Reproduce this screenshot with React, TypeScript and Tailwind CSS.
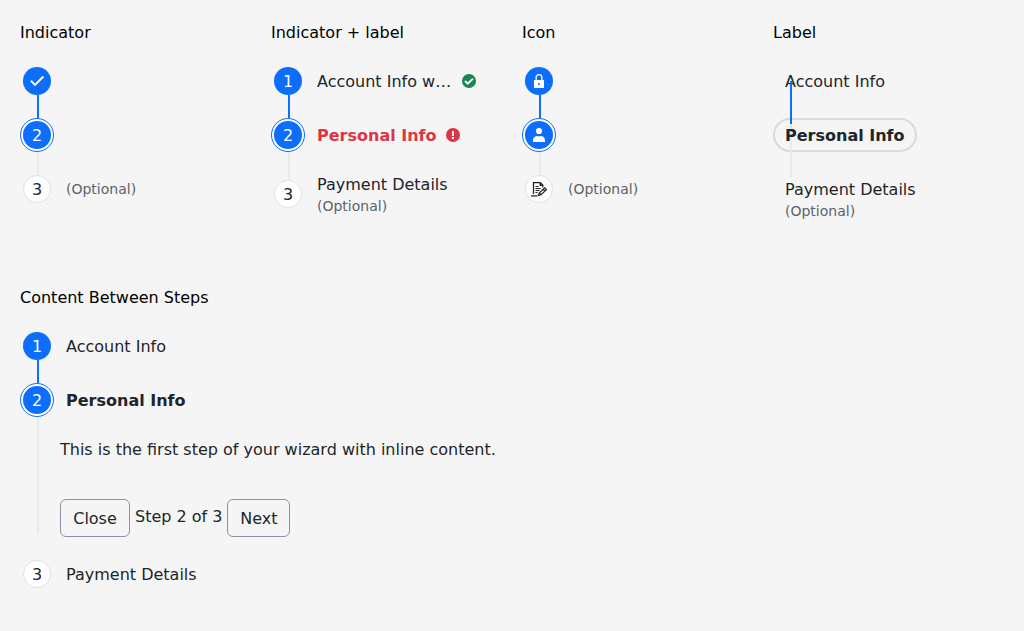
import React from "react";

type Kind = "done" | "active" | "todo";

const circleStyles: Record<Kind, string> = {
  done: "size-7 mx-[3px] bg-[#0d6efd] text-white",
  active: "size-[34px] border border-[#0d6efd] bg-white text-white",
  todo: "size-7 mx-[3px] border border-[#dfe1e4] bg-white text-[#212529]",
};

function Step({ kind, mark, line, optional, label, top, children }: {
  kind: Kind;
  mark: React.ReactNode;
  line?: string;
  label?: React.ReactNode;
  optional?: boolean;
  top?: string;
  children?: React.ReactNode;
}) {
  const content = typeof mark === "string" ? <span className="pt-0.5">{mark}</span> : mark;
  return (
    <li className={`flex ${top ?? ""}`}>
      <div className="flex w-[34px] shrink-0 flex-col">
        <span className={`flex shrink-0 items-center justify-center rounded-full ${circleStyles[kind]}`}>
          {kind === "active" ? (
            <span className="flex size-7 shrink-0 items-center justify-center rounded-full bg-[#0d6efd]">{content}</span>
          ) : content}
        </span>
        {line && <span className={`ml-[17px] w-0.5 ${line}`} />}
      </div>
      <div className="ml-3">
        <div className={`flex items-center ${kind === "active" ? "h-[34px]" : "h-7"}`}>
          {label}
          {optional && <small className="text-sm text-[#5c636a]">(Optional)</small>}
        </div>
        {children}
      </div>
    </li>
  );
}

const blue = "h-[23px] bg-[#0d6efd]";
const gray = "h-[23px] bg-[#e6ebef]";

const Check = () => (
  <svg width="16" height="16" viewBox="0 0 16 16" fill="none" stroke="#fff" strokeWidth="2">
    <path d="M1.9 7.8 6 11.9 14.4 3.5" />
  </svg>
);
const Lock = () => (
  <svg width="16" height="16" viewBox="0 0 16 16" fill="#fff" fillRule="evenodd">
    <path d="M3 7h1.5V4.5a3.5 3.5 0 0 1 7 0V7H13v8H3zM5.8 7h4.4V4.5a2.2 2.2 0 0 0-4.4 0zM7.1 10.2v1.8h1.8v-1.8z" />
  </svg>
);
const Person = () => (
  <svg width="16" height="16" viewBox="0 0 16 16" fill="#fff">
    <circle cx="8" cy="4" r="3.1" />
    <path d="M1.9 15v-1.2c0-2.9 2-4.8 4.6-4.8.5.3 1 .4 1.5.4s1-.1 1.5-.4c2.6 0 4.6 1.9 4.6 4.8V15z" />
  </svg>
);
const Form = () => (
  <svg width="16" height="16" viewBox="0 0 16 16" fill="none" stroke="#212529">
    <path strokeWidth="1.3" d="M0 14.9h6.5M2.5 13V1.6h6.8l2.5 2.5v2.4M9.2 1.5v2.9h2.6" />
    <path d="M4.5 5.5h3M4.5 7.5h5M4.5 9.5h4M4.5 11.5h2" />
    <path strokeWidth="1.2" d="m7.5 14.5.7-2.5 5.5-5.2 1.8 1.8-5.5 5.2zM8.4 12l1.7 1.8M12.2 8.2l1.8 1.8" />
  </svg>
);
const Valid = () => (
  <svg className="shrink-0" width="14" height="14" viewBox="0 0 14 14">
    <circle cx="7" cy="7" r="7" fill="#198754" />
    <path d="m3 7 2.7 2.7L11 4.6" fill="none" stroke="#fff" strokeWidth="2" />
  </svg>
);
const Invalid = () => (
  <svg className="ml-[9px]" width="14" height="14" viewBox="0 0 14 14">
    <circle cx="7" cy="7" r="7" fill="#dc3545" />
    <path d="M6 3h2v5H6zM6 9h2v2H6z" fill="#fff" />
  </svg>
);

function Column({ title, children }: { title: string; children: React.ReactNode }) {
  return (
    <section className="w-[251px] shrink-0">
      <h2 className="h-[25px] pt-px text-black">{title}</h2>
      <ol className="pt-[22px]">{children}</ol>
    </section>
  );
}

export default function App() {
  return (
    <main className="min-h-[631px] overflow-hidden bg-[#f5f5f5] px-5 pt-5 font-['DejaVu_Sans',sans-serif] text-base text-[#212529]">
      <div className="flex h-[265px]">
        <Column title="Indicator">
          <Step kind="done" mark={<Check />} line={blue} />
          <Step kind="active" mark="2" line={gray} />
          <Step kind="todo" mark="3" optional />
        </Column>
        <Column title="Indicator + label">
          <Step kind="done" mark="1" line={blue} label={<><span className="w-[145px] whitespace-nowrap pt-0.5">Account Info w…</span><Valid /></>} />
          <Step kind="active" mark="2" line="h-[28.4px] bg-[#e6ebef]" label={<><b className="pt-0.5 text-[#dc3545]">Personal Info</b><Invalid /></>} />
          <Step kind="todo" mark="3" label={<span className="flex flex-col"><span className="h-[23px] leading-6">Payment Details</span><small className="text-sm leading-5 text-[#5c636a]">(Optional)</small></span>} />
        </Column>
        <Column title="Icon">
          <Step kind="done" mark={<Lock />} line={blue} />
          <Step kind="active" mark={<Person />} line={gray} />
          <Step kind="todo" mark={<Form />} optional />
        </Column>
        <Column title="Label">
          <li className="relative flex h-[51px] items-start px-3 pt-[3px]">
            Account Info
            <span className="absolute left-[17px] top-[14px] z-10 h-[43px] w-0.5 bg-[#0d6efd]" />
          </li>
          <li className="relative flex h-[34px] w-36 items-center rounded-full border-2 border-[#dadada] px-2.5 font-bold">
            <span className="absolute left-[15px] top-1 h-[54px] w-0.5 bg-[#e6ebef]" />
            <span className="relative whitespace-nowrap pt-0.5">Personal Info</span>
          </li>
          <li className="relative flex flex-col px-3 pt-[26px]">
            <span className="h-[23px] leading-6">Payment Details</span>
            <small className="text-sm leading-5 text-[#5c636a]">(Optional)</small>
          </li>
        </Column>
      </div>
      <section>
        <h2 className="h-[25px] pt-px text-black">Content Between Steps</h2>
        <ol className="pt-[22px]">
          <Step kind="done" mark="1" line={blue} label={<span className="pt-0.5">Account Info</span>} />
          <Step kind="active" mark="2" line="mb-[3px] flex-1 bg-[#e6ebef]" label={<b className="pt-0.5">Personal Info</b>}>
            <div className="-ml-1.5 pt-[21px]">
              <p className="h-[61px]">This is the first step of your wizard with inline content.</p>
              <div className="flex">
                <button className="h-[38px] w-[70px] rounded-md border border-[#8f8fa3] pt-0.5">Close</button>
                <span className="mx-[5px] pt-1.5">Step 2 of 3</span>
                <button className="h-[38px] w-[63px] rounded-md border border-[#8f8fa3] pt-0.5">Next</button>
              </div>
            </div>
          </Step>
          <Step kind="todo" mark="3" label={<span className="pt-0.5">Payment Details</span>} top="pt-[23px]" />
        </ol>
      </section>
    </main>
  );
}
